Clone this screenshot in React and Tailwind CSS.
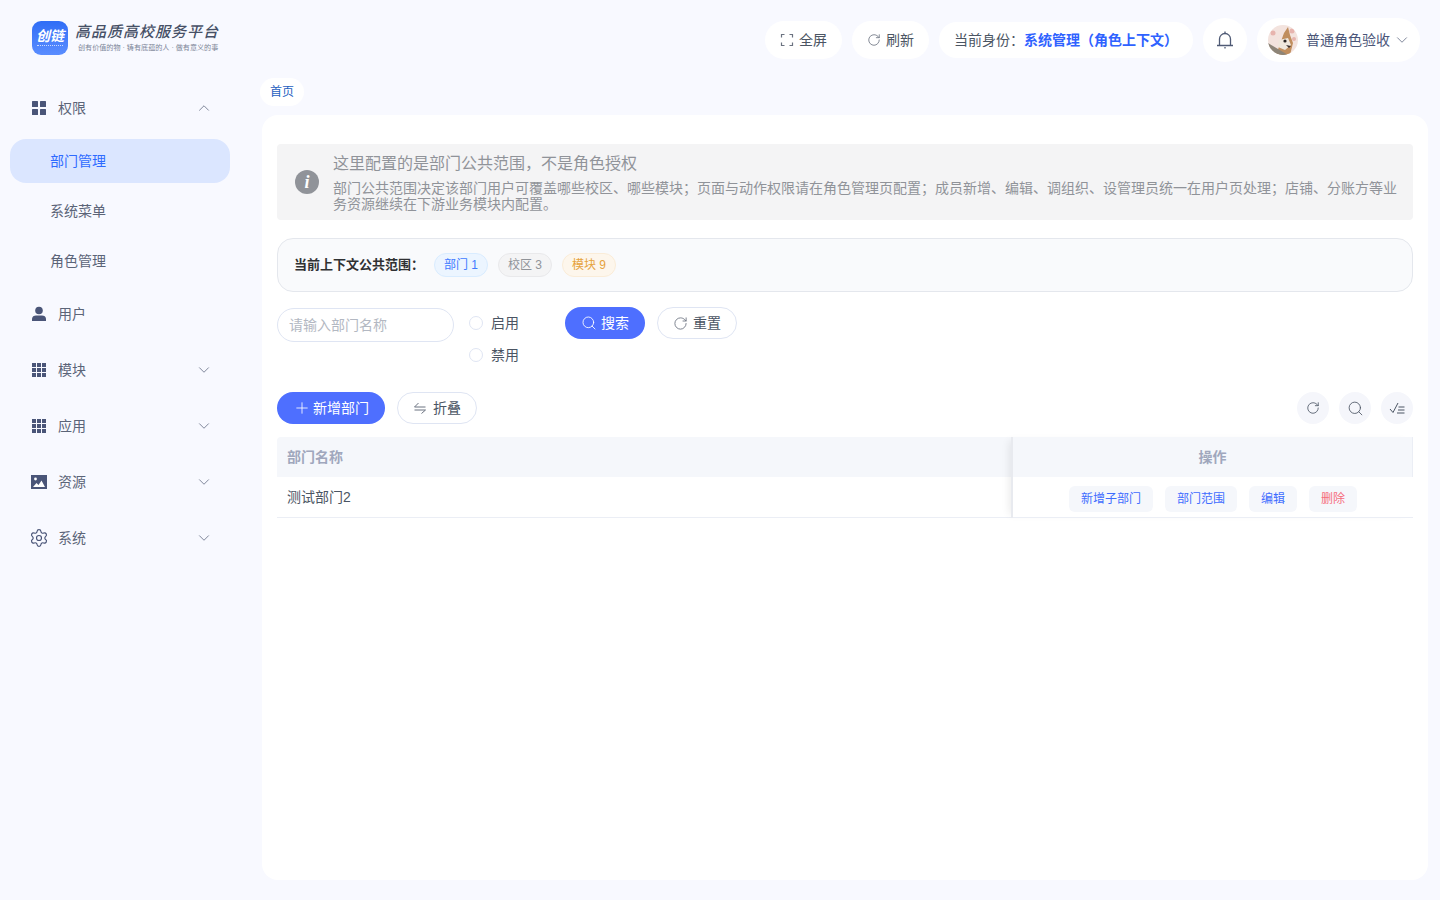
import { ChevronDown, ChevronUp, Plus, RotateCw, Search, Settings } from "lucide-react";

const font = { fontFamily: '"Liberation Sans", "Noto Sans CJK SC", "Noto Sans", sans-serif' };

const Squares = () => (
  <svg viewBox="0 0 16 16" className="w-4 h-4" fill="#4a5578">
    <rect x="1" y="1" width="6" height="6" rx="0.5" />
    <rect x="9" y="1" width="6" height="6" rx="0.5" />
    <rect x="1" y="9" width="6" height="6" rx="0.5" />
    <rect x="9" y="9" width="6" height="6" rx="0.5" />
  </svg>
);

const Grid = () => (
  <svg viewBox="0 0 16 16" className="w-4 h-4" fill="#4a5578">
    {[1, 6, 11].map((y) =>
      [1, 6, 11].map((x) => <rect key={x + "-" + y} x={x} y={y} width="4" height="4" />)
    )}
  </svg>
);

const User = () => (
  <svg viewBox="0 0 16 16" className="w-4 h-4" fill="#4a5578">
    <circle cx="8" cy="4.5" r="3.8" />
    <path d="M1 15v-2.2C1 10.6 3 9.4 5 9.4h6c2 0 4 1.2 4 3.4V15z" />
  </svg>
);

const Picture = () => (
  <svg viewBox="0 0 16 14" className="w-4 h-[14px]">
    <rect width="16" height="14" fill="#4a5578" />
    <circle cx="4.5" cy="4" r="1.4" fill="#fff" />
    <path d="M2 12l3.5-4 2 2 3-4.5L14 12z" fill="#fff" />
  </svg>
);

const Fullscreen = () => (
  <svg viewBox="0 0 14 14" className="w-3.5 h-3.5" fill="none" stroke="#6b7280" strokeWidth="1.2">
    <path d="M1.5 4.5v-3h3M9.5 1.5h3v3M12.5 9.5v3h-3M4.5 12.5h-3v-3" />
  </svg>
);

const BellIcon = () => (
  <svg viewBox="0 0 18 20" className="w-[18px] h-5" fill="none" stroke="#4f5a75" strokeWidth="1.3">
    <path d="M3.5 15.5V9a5.5 5.5 0 0 1 11 0v6.5" />
    <path d="M1 15.5h16" strokeWidth="1.5" />
    <path d="M9 1.5v2M9 17v1.5" />
  </svg>
);

const Fold = () => (
  <svg viewBox="0 0 14 14" className="w-3.5 h-3.5" fill="none" stroke="#6b7280" strokeWidth="1">
    <path d="M5.5 2L1.5 6h11M1.500 9h11l-4 3.500" />
  </svg>
);

const Columns = () => (
  <svg viewBox="0 0 16 14" className="w-4 h-3.5" fill="none" stroke="#4b5563" strokeWidth="1">
    <path d="M1 8l3 3.5L9 2M9.500 6h6M9 9h6.500M8 12h7.500" />
  </svg>
);

const Avatar = () => (
  <svg viewBox="0 0 30 30" className="w-[30px] h-[30px] rounded-full">
    <rect width="30" height="30" fill="#f3e3de" />
    <circle cx="5" cy="8" r="2.500" fill="#e7b4ae" />
    <circle cx="24" cy="6" r="2.500" fill="#e7b4ae" />
    <circle cx="26" cy="14" r="2" fill="#e7b4ae" />
    <path d="M8 30L16 8l4-6 2 8 3 8-3 12z" fill="#c08e5e" />
    <path d="M0 30V18l10 6 10 6z" fill="#8d8578" />
    <path d="M11 15l9-2 3 7-6 5-7-3z" fill="#efe7dc" />
    <circle cx="17" cy="16" r="1.600" fill="#2b2523" />
    <path d="M18 20l5 1-2 2z" fill="#3a2f2b" />
  </svg>
);

const menus = [
  { label: "用户", icon: <User /> },
  { label: "模块", icon: <Grid />, arrow: true },
  { label: "应用", icon: <Grid />, arrow: true },
  { label: "资源", icon: <Picture />, arrow: true },
  { label: "系统", icon: <Settings size={20} color="#4a5578" strokeWidth={1.4} className="shrink-0" />, arrow: true },
];

const actions = [
  { label: "新增子部门", color: "text-[#3f6dff]" },
  { label: "部门范围", color: "text-[#3f6dff]" },
  { label: "编辑", color: "text-[#3f6dff]" },
  { label: "删除", color: "text-[#f56c7c]" },
];

const App = () => {
  return (
    <div className="bg-[#f8f9ff] h-screen flex flex-col overflow-hidden text-[14px] text-[#4b5563]" style={font}>
      <header className="h-[78px] shrink-0 flex items-center justify-between pt-0.5 pl-8 pr-5">
        <div className="flex items-center gap-[7px] -mt-[5px]">
          <div className="w-9 h-[34px] rounded-[9px] bg-gradient-to-b from-[#2f6df6] to-[#5a8dff] flex flex-col items-center justify-center text-white">
            <span className="text-[14px] leading-[15px] font-bold italic">创链</span>
            <span className="w-[26px] mt-px border-t border-dotted border-white/70" />
          </div>
          <div className="flex flex-col">
            <span className="text-[15px] leading-[20px] font-medium italic tracking-[1px] text-[#465066]">
              高品质高校服务平台
            </span>
            <span className="text-[7.1px] leading-[10px] mt-[1px] pl-[3px] text-[#7c8598]">
              创有价值的物 · 铸有底蕴的人 · 做有意义的事
            </span>
          </div>
        </div>

        <div className="flex items-center gap-2.5">
          <button className="h-[38px] w-[77px] rounded-full bg-white flex items-center justify-center gap-[5px]">
            <Fullscreen />
            全屏
          </button>
          <button className="h-[38px] w-[77px] rounded-full bg-white flex items-center justify-center gap-[5px]">
            <RotateCw size={14} color="#6b7280" strokeWidth={1.4} />
            刷新
          </button>
          <div className="h-9 w-[254px] rounded-full bg-white flex items-center pl-[15px]">
            当前身份：
            <span className="text-[#2f62ff] font-semibold">系统管理（角色上下文）</span>
          </div>
          <button className="h-11 w-11 rounded-full bg-white flex items-center justify-center">
            <BellIcon />
          </button>
          <div className="h-11 w-[163px] rounded-full bg-white flex items-center pl-[11px] gap-2">
            <Avatar />
            <span className="text-[#4a5578]">普通角色验收</span>
            <ChevronDown size={18} color="#7c8598" strokeWidth={1.3} className="-ml-[5px]" />
          </div>
        </div>
      </header>

      <div className="flex-1 flex min-h-0">
        <aside className="w-[260px] shrink-0 pr-[30px]">
          <div className="h-[58px] pt-0.5 flex items-center pl-[31px] pr-[17px] gap-[11px]">
            <Squares />
            <span className="flex-1 text-[#5b6478]">权限</span>
            <ChevronUp size={18} color="#7c8598" strokeWidth={1.3} />
          </div>
          <div className="pl-2.5 flex flex-col gap-1.5 pt-[3px] pb-[3px]">
            <div className="h-11 rounded-2xl bg-[#dbe6ff] text-[#2f6bff] flex items-center pl-10">部门管理</div>
            <div className="h-11 flex items-center pl-10 text-[#5b6478]">系统菜单</div>
            <div className="h-11 flex items-center pl-10 text-[#5b6478]">角色管理</div>
          </div>
          {menus.map((m) => (
            <div key={m.label} className="h-14 flex items-center pl-[31px] pr-[17px] gap-[11px] text-[#5b6478]">
              <span className="w-4 flex justify-center">{m.icon}</span>
              <span className="flex-1">{m.label}</span>
              {m.arrow && <ChevronDown size={18} color="#7c8598" strokeWidth={1.3} />}
            </div>
          ))}
        </aside>

        <main className="flex-1 min-w-0 flex flex-col pr-3 pb-5">
          <span className="self-start h-7 w-11 rounded-full bg-white text-[12px] text-[#1f5fbf] flex items-center justify-center">
            首页
          </span>

          <div className="flex-1 mt-[9px] ml-0.5 bg-white rounded-2xl px-[15px] pt-[29px]">
            <div className="h-[76px] rounded bg-[#f4f4f5] flex items-center pl-[18px] pr-4 gap-[14px] text-[#909399]">
              <span className="w-6 h-6 shrink-0 rounded-full bg-[#909399] text-white flex items-center justify-center font-['Liberation_Serif',serif] italic font-bold text-[18px]">
                i
              </span>
              <div className="pt-px">
                <p className="text-[16px] leading-[22px]">这里配置的是部门公共范围，不是角色授权</p>
                <p className="text-[14px] leading-4 mt-[5px]">
                  部门公共范围决定该部门用户可覆盖哪些校区、哪些模块；页面与动作权限请在角色管理页配置；成员新增、编辑、调组织、设管理员统一在用户页处理；店铺、分账方等业务资源继续在下游业务模块内配置。
                </p>
              </div>
            </div>

            <div className="h-[54px] mt-[18px] rounded-2xl border border-[#e4e7ed] bg-[#f9fafc] flex items-center pl-4 text-[12px]">
              <span className="text-[13px] font-bold text-[#303133] w-[140px]">当前上下文公共范围：</span>
              <div className="flex gap-2.5">
                <span className="h-6 w-[54px] rounded-full border border-[#d9ecff] bg-[#ecf5ff] text-[#3f7bff] flex items-center justify-center">
                  部门 1
                </span>
                <span className="h-6 w-[54px] rounded-full border border-[#e9e9eb] bg-[#f4f4f5] text-[#909399] flex items-center justify-center">
                  校区 3
                </span>
                <span className="h-6 w-[54px] rounded-full border border-[#faecd8] bg-[#fdf6ec] text-[#e6a23c] flex items-center justify-center">
                  模块 9
                </span>
              </div>
            </div>

            <div className="flex mt-[15px]">
              <input
                placeholder="请输入部门名称"
                className="w-[177px] h-[34px] mt-px rounded-full border border-[#dfe5f3] px-[11px] text-[14px] outline-none placeholder:text-[#b3b8c2]"
              />
              <div className="ml-[15px] w-[96px] flex flex-col">
                <label className="h-8 flex items-center gap-2">
                  <span className="w-3.5 h-3.5 rounded-full border border-[#dfe5f3]" />
                  启用
                </label>
                <label className="h-8 flex items-center gap-2">
                  <span className="w-3.5 h-3.5 rounded-full border border-[#dfe5f3]" />
                  禁用
                </label>
              </div>
              <button className="w-20 h-8 rounded-full bg-[#4e6fff] text-white flex items-center justify-center gap-1">
                <Search size={16} strokeWidth={1.3} />
                搜索
              </button>
              <button className="w-20 h-8 ml-3 rounded-full border border-[#dfe5f3] flex items-center justify-center gap-[5px]">
                <RotateCw size={15} color="#6b7280" strokeWidth={1.4} />
                重置
              </button>
            </div>

            <div className="flex items-center justify-between mt-[21px]">
              <div className="flex gap-3">
                <button className="w-[108px] h-8 rounded-full bg-[#4e6fff] text-white flex items-center justify-center gap-0.5">
                  <Plus size={18} strokeWidth={1.1} />
                  新增部门
                </button>
                <button className="w-20 h-8 rounded-full border border-[#dfe5f3] flex items-center justify-center gap-1.5">
                  <Fold />
                  折叠
                </button>
              </div>
              <div className="flex gap-2.5">
                <button className="w-8 h-8 rounded-full bg-[#f5f6fb] flex items-center justify-center">
                  <RotateCw size={14} color="#4b5563" strokeWidth={1.4} />
                </button>
                <button className="w-8 h-8 rounded-full bg-[#f5f6fb] flex items-center justify-center">
                  <Search size={17} color="#4b5563" strokeWidth={1.2} />
                </button>
                <button className="w-8 h-8 rounded-full bg-[#f5f6fb] flex items-center justify-center">
                  <Columns />
                </button>
              </div>
            </div>

            <div className="mt-[13px] flex">
              <div className="flex-1 min-w-0">
                <div className="h-10 bg-[#f5f7fb] rounded-tl flex items-center px-2.5 font-bold text-[#a0a7bd]">
                  部门名称
                </div>
                <div className="h-[41px] border-b border-[#ebeef5] flex items-center px-2.5 text-[#4b5563]">
                  测试部门2
                </div>
              </div>
              <div className="w-[402px] shrink-0 border-l-2 border-[#e8eaef] shadow-[-6px_0_8px_-4px_rgba(0,0,0,0.08)]">
                <div className="h-10 bg-[#f5f7fb] border-r border-[#ebeef5] flex items-center justify-center font-bold text-[#a0a7bd]">
                  操作
                </div>
                <div className="h-[41px] pt-1 border-b border-[#ebeef5] flex items-center justify-center gap-3 text-[12px]">
                  {actions.map((a) => (
                    <span key={a.label} className={"h-[26px] px-3 rounded-md bg-[#f5f7fb] flex items-center " + a.color}>
                      {a.label}
                    </span>
                  ))}
                </div>
              </div>
            </div>
          </div>
        </main>
      </div>
    </div>
  );
};

export default App;
